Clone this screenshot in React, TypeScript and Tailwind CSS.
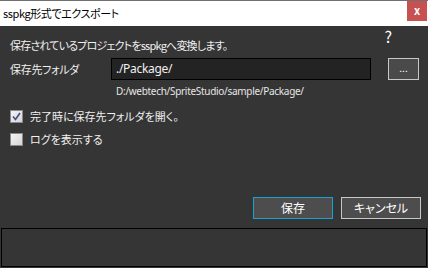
import React from "react";

const jp = "font-['Noto_Sans_CJK_JP',sans-serif] [font-feature-settings:'palt']";

function Checkbox({ checked }: { checked: boolean }) {
  return (
    <div className="w-[13px] h-[13px] border border-[#8a8a8a] bg-gradient-to-br from-[#f4f4f4] to-[#d6d6d6] flex items-center justify-center shrink-0">
      {checked && (
        <svg width="9" height="9" viewBox="0 0 9 9">
          <path d="M1 4.5 L3.5 7.5 L8 1" fill="none" stroke="#3d4c8e" strokeWidth="1.6" />
        </svg>
      )}
    </div>
  );
}

export default function App() {
  return (
    <div className={`w-[428px] h-[268px] bg-[#353535] flex flex-col border-t border-[#707070] ${jp}`}>
      <div className="h-[25px] bg-white flex items-start justify-between shrink-0">
        <div className="pl-[3px] pt-[4px] text-[11px] leading-[16px] tracking-[-0.4px] text-black">sspkg形式でエクスポート</div>
        <div className="w-[20px] h-[20px] mr-[1px] bg-[#c75050] flex items-center justify-center text-white text-[11px] font-bold leading-none pb-[2px]">x</div>
      </div>
      <div className="relative flex-1 flex flex-col pt-[9px]">
        <div className="absolute right-[36px] top-[1px] text-[16px] leading-[18px] text-white">?</div>
        <div className="h-[20px] flex items-center pl-[10px] text-[11px] tracking-[-0.8px] text-[#f0f0f0]">保存されているプロジェクトをsspkgへ変換します。</div>
        <div className="mt-[3px] h-[22px] flex items-center">
          <div className="w-[111px] pl-[10px] text-[11px] tracking-[-0.3px] text-[#f0f0f0]">保存先フォルダ</div>
          <div className="w-[260px] h-[22px] bg-[#232323] border border-black flex items-center pl-[4px] text-[12px] tracking-[-0.3px] text-[#f0f0f0] font-['Noto_Sans',sans-serif]">./Package/</div>
          <div className="ml-[17px] w-[31px] h-[22px] bg-[#4a4a4a] border border-[#c8c8c8] flex items-center justify-center text-[10px] text-white leading-none pb-[3px]">...</div>
        </div>
        <div className="mt-[2px] h-[18px] flex items-center pl-[116px] text-[10px] tracking-[-0.3px] text-[#e6e6e6] font-['Noto_Sans',sans-serif]">D:/webtech/SpriteStudio/sample/Package/</div>
        <div className="mt-[6px] h-[20px] flex items-center pl-[10px] gap-[7px] text-[11px] text-[#f0f0f0]">
          <Checkbox checked />
          <span>完了時に保存先フォルダを開く。</span>
        </div>
        <div className="mt-[3px] h-[20px] flex items-center pl-[10px] gap-[7px] text-[11px] text-[#f0f0f0]">
          <Checkbox checked={false} />
          <span>ログを表示する</span>
        </div>
        <div className="flex-1" />
        <div className="h-[22px] flex justify-end gap-[8px] pr-[7px]">
          <div className="w-[80px] h-[22px] bg-[#4d4d4d] border border-[#1aa3d0] flex items-center justify-center text-[12px] text-white">保存</div>
          <div className="w-[80px] h-[22px] bg-[#4d4d4d] border border-[#c8c8c8] flex items-center justify-center text-[12px] text-white">キャンセル</div>
        </div>
        <div className="mt-[9px] mx-[1px] mb-[1px] h-[39px] border border-black bg-[#353535]" />
      </div>
    </div>
  );
}
